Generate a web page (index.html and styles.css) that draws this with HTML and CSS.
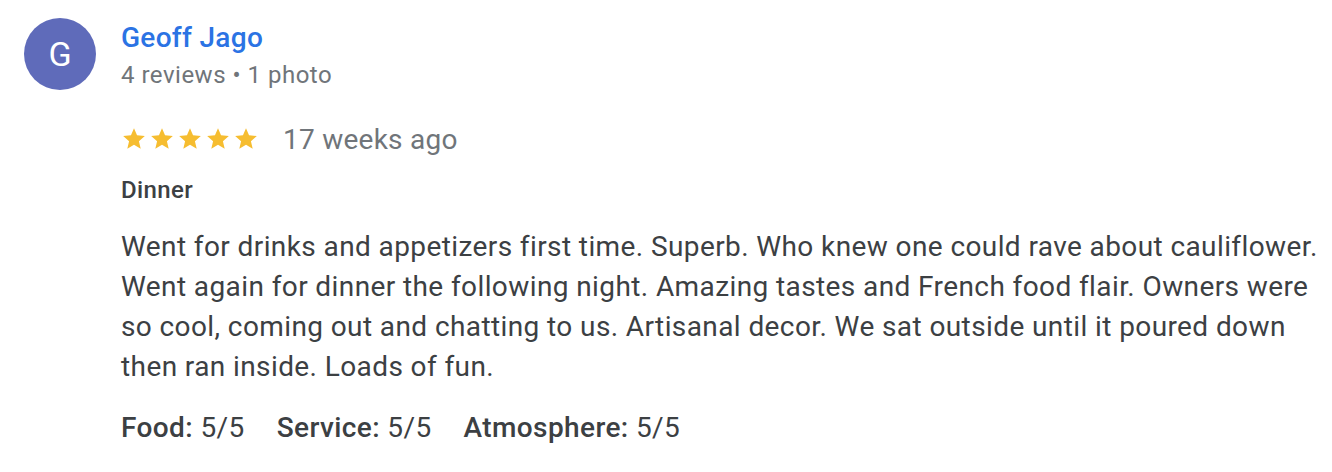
FILE: index.html
```html
<!DOCTYPE html>
<html>
<head>
<meta charset="utf-8">
<link rel="stylesheet" href="styles.css">
</head>
<body>
<div class="review">
  <div class="header">
    <div class="avatar">G</div>
    <div class="who">
      <div class="name">Geoff Jago</div>
      <div class="meta">4 reviews • 1 photo</div>
    </div>
  </div>
  <div class="content">
    <div class="rating">
      <div class="stars">
        <svg viewBox="0 0 24 24" class="star"><path d="M12 17.27L18.18 21l-1.64-7.030L22 9.24l-7.19-.61L12 2 9.19 8.63 2 9.24l5.46 4.73L5.82 21z"/></svg>
        <svg viewBox="0 0 24 24" class="star"><path d="M12 17.27L18.18 21l-1.64-7.03L22 9.24l-7.19-.61L12 2 9.19 8.63 2 9.24l5.46 4.73L5.82 21z"/></svg>
        <svg viewBox="0 0 24 24" class="star"><path d="M12 17.27L18.18 21l-1.64-7.03L22 9.24l-7.19-.61L12 2 9.19 8.63 2 9.24l5.46 4.73L5.82 21z"/></svg>
        <svg viewBox="0 0 24 24" class="star"><path d="M12 17.27L18.18 21l-1.64-7.03L22 9.24l-7.19-.61L12 2 9.19 8.63 2 9.24l5.46 4.73L5.82 21z"/></svg>
        <svg viewBox="0 0 24 24" class="star"><path d="M12 17.27L18.18 21l-1.64-7.03L22 9.24l-7.19-.61L12 2 9.19 8.63 2 9.24l5.46 4.73L5.82 21z"/></svg>
      </div>
      <span class="ago">17 weeks ago</span>
    </div>
    <div class="tag">Dinner</div>
    <p class="text">Went for drinks and appetizers first time. Superb. Who knew one could rave about cauliflower. Went again for dinner the following night. Amazing tastes and French food flair. Owners were so cool, coming out and chatting to us. Artisanal decor. We sat outside until it poured down then ran inside. Loads of fun.</p>
    <div class="scores">
      <span class="score"><b>Food:</b> 5/5</span>
      <span class="score"><b>Service:</b> 5/5</span>
      <span class="score"><b>Atmosphere:</b> 5/5</span>
    </div>
  </div>
</div>
</body>
</html>
```

FILE: styles.css
```css
html, body {
  margin: 0;
  padding: 0;
  background: #fff;
}
body {
  font-family: Roboto, "Liberation Sans", sans-serif;
  color: #3c4043;
}
.review {
  padding: 18px 0 0 24px;
}
.header {
  display: flex;
  align-items: flex-start;
}
.avatar {
  width: 72px;
  height: 72px;
  border-radius: 50%;
  background: #5f6bba;
  color: #fff;
  font-size: 34px;
  display: flex;
  align-items: center;
  justify-content: center;
  flex: none;
}
.who {
  margin-left: 25px;
  margin-top: 2px;
}
.name {
  font-size: 28px;
  font-weight: 500;
  letter-spacing: 0.3px;
  color: #2b73e4;
  line-height: 36px;
}
.meta {
  font-size: 24px;
  letter-spacing: 0.5px;
  color: #70757a;
  line-height: 32px;
  margin-top: 3px;
}
.content {
  padding-left: 97px;
}
.rating {
  display: flex;
  align-items: center;
  margin-top: 28px;
  height: 40px;
}
.stars {
  display: flex;
  gap: 2px;
}
.star {
  width: 26px;
  height: 26px;
  fill: #f6bd30;
}
.ago {
  font-size: 28px;
  letter-spacing: 0.25px;
  color: #70757a;
  margin-left: 24px;
}
.tag {
  margin-top: 16px;
  font-size: 24px;
  font-weight: 500;
  letter-spacing: 0.4px;
  line-height: 30px;
}
.text {
  margin: 22px 0 0 0;
  font-size: 28px;
  letter-spacing: 0.4px;
  line-height: 40px;
  padding-right: 8px;
}
.scores {
  margin-top: 21px;
  font-size: 28px;
  letter-spacing: 0.4px;
  display: flex;
  gap: 32px;
  line-height: 40px;
}
.score b {
  font-weight: 500;
}
```
